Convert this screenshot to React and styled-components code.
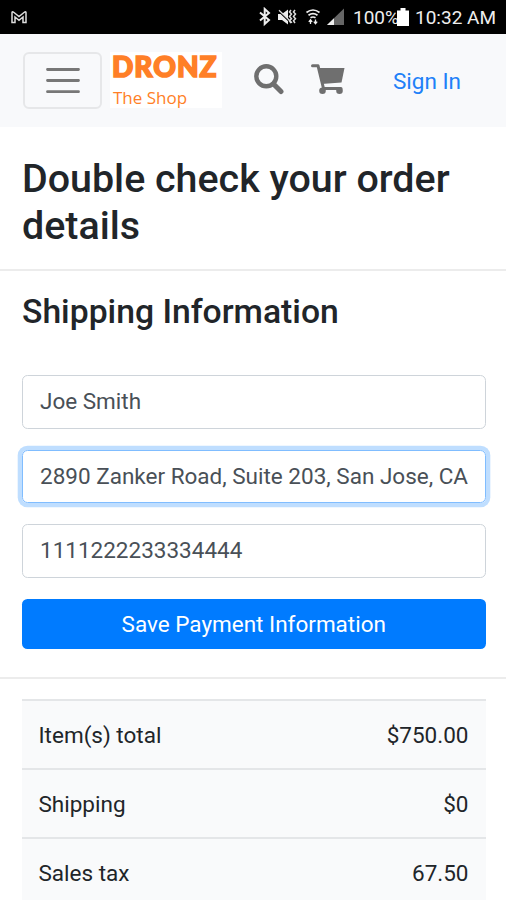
import React from 'react';
import styled, {createGlobalStyle} from "styled-components";

const textColor = '#212529';
const iconColor = '#6f6f6f';

const totals = [
  {label: 'Item(s) total', value: '$750.00'},
  {label: 'Shipping', value: '$0'},
  {label: 'Sales tax', value: '67.50'},
];

const StatusIcons = () => (
  <svg width="88" height="20" viewBox="0 0 88 20" fill="none">
    <path d="M2 5.5L11 13L6.7 17V2L11 6L2 13.5" stroke="#eee" strokeWidth="2"/>
    <path d="M20 7h4l6-4.5v15L24 13h-4z" fill="#eee"/>
    <path d="M20 3.5L33 16" stroke="#000" strokeWidth="1.6"/>
    <path d="M21 3.2L34 15.7" stroke="#ddd" strokeWidth="1.2"/>
    <path d="M33 3l-1.5 2 2 2-2 2.4 2 2.4-2 2 1.5 2.2M37 3l-1.5 2 2 2-2 2.4 2 2.4-2 2 1.5 2.2" stroke="#ddd" strokeWidth="1.5"/>
    <path d="M48.5 5.5q6.500-5 13 0M50.500 8.300q4.500-3.300 9 0M52.500 10.800q2.500-1.600 5 0" stroke="#eee" strokeWidth="1.7"/>
    <path d="M52.500 17v-4M50.800 14.800l1.700-2 1.700 2M57.500 12.500v4M55.800 14.700l1.700 2 1.700-2" stroke="#eee" strokeWidth="1.3"/>
    <path d="M69 18L86 1.500V18z" fill="#666"/>
    <path d="M69 18L76 11.200V18z" fill="#eee"/>
  </svg>
);

const App = () => {
  return (
    <Page>
      <GlobalStyle/>
      <StatusBar>
        <svg width="18" height="14" viewBox="0 0 18 14" fill="none">
          <path d="M2 12.500V2.500Q2 1 4 2.500L9 6.500L14 2.500Q16 1 16 2.500V12.500H13V7L9 10.300L5 7V12.500Z" stroke="#ddd" strokeWidth="1.5"/>
        </svg>
        <StatusRight>
          <StatusIcons/>
          <StatusText $ml={7} $w={44}>100%</StatusText>
          <svg width="12" height="18" viewBox="0 0 12 18">
            <path d="M0 2.500h3.500V0h5v2.500H12V18H0z" fill="#fff"/>
          </svg>
          <StatusText $ml={6} $w={80}>10:32 AM</StatusText>
        </StatusRight>
      </StatusBar>
      <NavBar>
        <Toggler>
          <svg width="34" height="27" viewBox="0 0 34 27">
            <path d="M1.500 2.500h31M1.500 13.500h31M1.500 24.700h31" stroke="#777" strokeWidth="2.800" strokeLinecap="round"/>
          </svg>
        </Toggler>
        <Logo>
          <Brand>DRONZ</Brand>
          <Tagline>The Shop</Tagline>
        </Logo>
        <NavIcon $ml={32} width="30" height="31" viewBox="0 0 30 31">
          <circle cx="12.300" cy="12.300" r="10" fill="none" stroke={iconColor} strokeWidth="4.400"/>
          <path d="M19.500 20L27 27.500" stroke={iconColor} strokeWidth="5" strokeLinecap="round"/>
        </NavIcon>
        <NavIcon $ml={27} width="34" height="31" viewBox="0 0 34 31">
          <path d="M1.500 1.700H7L12.500 24.500H30" fill="none" stroke={iconColor} strokeWidth="3" strokeLinejoin="round" strokeLinecap="round"/>
          <path d="M7 4H33.500L30.500 18.500L10.500 20z" fill={iconColor}/>
          <circle cx="11.500" cy="26.800" r="3.300" fill={iconColor}/>
          <circle cx="28.500" cy="26.800" r="3.300" fill={iconColor}/>
        </NavIcon>
        <SignIn>Sign In</SignIn>
      </NavBar>
      <Title>Double check your order details</Title>
      <Divider/>
      <Section>
        <SubTitle>Shipping Information</SubTitle>
        <Form>
          <Field>Joe Smith</Field>
          <Field $focused>2890 Zanker Road, Suite 203, San Jose, CA</Field>
          <Field>1111222233334444</Field>
          <SaveButton>Save Payment Information</SaveButton>
        </Form>
      </Section>
      <Divider/>
      <Totals>
        {totals.map(item => (
          <TotalRow key={item.label}>
            <span>{item.label}</span>
            <span>{item.value}</span>
          </TotalRow>
        ))}
      </Totals>
    </Page>
  );
};

const GlobalStyle = createGlobalStyle`
  * {
    box-sizing: border-box;
  }

  body {
    margin: 0;
    background: #fff;
    overflow: hidden;
  }
`;

const Page = styled.div`
  width: 506px;
  height: 900px;
  overflow: hidden;
  font-family: Roboto, sans-serif;
  font-size: 22.5px;
  color: ${textColor};
`;

const StatusBar = styled.div`
  height: 34px;
  padding: 0 11px 0 10px;
  display: flex;
  align-items: center;
  justify-content: space-between;
  background: #000;
`;

const StatusRight = styled.div`
  display: flex;
  align-items: center;
`;

const StatusText = styled.span`
  width: ${({$w}) => $w}px;
  margin-left: ${({$ml}) => $ml}px;
  padding-top: 2px;
  font-size: 19px;
  line-height: 24px;
  white-space: nowrap;
  color: #eee;
`;

const NavBar = styled.div`
  height: 93px;
  padding-left: 23px;
  display: flex;
  align-items: flex-start;
  background: #f8f9fb;
`;

const Toggler = styled.button`
  width: 79px;
  height: 57px;
  margin-top: 18px;
  padding: 0;
  display: flex;
  align-items: center;
  justify-content: center;
  border: 2px solid #e6e7e9;
  border-radius: 6px;
  background: transparent;
`;

const Logo = styled.div`
  width: 112px;
  height: 56px;
  margin: 18px 0 0 8px;
  padding-left: 2px;
  background: #fff;
  color: #ff7f27;
`;

const Brand = styled.div`
  height: 27px;
  font-family: Lato, sans-serif;
  font-size: 28px;
  font-weight: 900;
  line-height: 28px;
  letter-spacing: 1px;
  -webkit-text-stroke: 1.6px #ff7f27;
`;

const Tagline = styled.div`
  padding-left: 1px;
  font-family: "Open Sans", sans-serif;
  font-size: 17px;
  font-weight: 500;
  line-height: 37px;
`;

const NavIcon = styled.svg`
  margin: 30px 0 0 ${({$ml}) => $ml}px;
  flex-shrink: 0;
`;

const SignIn = styled.a`
  margin: 30px 0 0 48px;
  line-height: 34px;
  white-space: nowrap;
  color: #2080f8;
`;

const Title = styled.h3`
  margin: 0;
  height: 142px;
  padding: 28px 22px 0;
  font-size: 39.4px;
  font-weight: 500;
  line-height: 47px;
`;

const Divider = styled.div`
  height: 2px;
  background: #ececec;
`;

const Section = styled.div`
  height: 406px;
  padding: 21px 20.5px 0 22px;
`;

const SubTitle = styled.h4`
  margin: 0 0 43px;
  font-size: 33.7px;
  font-weight: 500;
  line-height: 40px;
`;

const Form = styled.div`
  display: flex;
  flex-direction: column;
  gap: 21px;
`;

const Field = styled.div`
  height: 53.7px;
  padding: 0 17px;
  border: 1.5px solid ${({$focused}) => $focused ? '#80bdff' : '#ced4da'};
  border-radius: 5.5px;
  line-height: 51px;
  white-space: nowrap;
  color: #495057;
  box-shadow: ${({$focused}) => $focused ? '0 0 0 4.3px #bfdeff' : 'none'};
`;

const SaveButton = styled.button`
  height: 50px;
  padding: 0;
  border: 0;
  border-radius: 5.5px;
  background: #007bff;
  color: #fff;
  font: inherit;
`;

const Totals = styled.div`
  margin: 20px 20.5px 0 22px;
`;

const TotalRow = styled.div`
  height: 69px;
  padding: 0 17px 0 16.5px;
  display: flex;
  align-items: center;
  justify-content: space-between;
  border-top: 2px solid #e4e6e8;
  background: #f9fafb;
`;

export default App;
